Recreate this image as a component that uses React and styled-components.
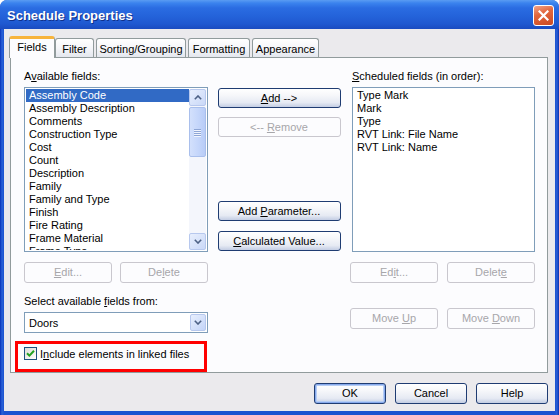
import React from "react";
import styled, { createGlobalStyle, css } from "styled-components";

const GlobalStyle = createGlobalStyle`
    html, body {
        margin : 0;
        padding : 0;
        background : #ffffff;
    }
    body {
        font-family : "Liberation Sans", Arial, sans-serif;
        font-size : 11px;
        color : #000000;
    }
`;

const Window = styled.div`
    width : 559px;
    height : 415px;
    box-sizing : border-box;
    display : flex;
    flex-direction : column;
    background : linear-gradient(90deg, #0831B8 0px, #2A63D8 2px, #1B52D0 4px, #1B52D0 555px, #2A5FD6 557px, #0A2FAE 559px);
    border-radius : 7px 7px 0 0;
    overflow : hidden;
`;

const TitleBar = styled.div`
    height : 29px;
    flex-shrink : 0;
    display : flex;
    align-items : center;
    justify-content : space-between;
    padding : 1px 5px 0 7px;
    box-sizing : border-box;
    background : linear-gradient(180deg, #5A9CF2 0px, #3B83EE 3px, #2A6CE2 8px, #2463DA 16px, #1F58D0 24px, #1A4BC0 29px);
`;

const Title = styled.span`
    color : #ffffff;
    font-weight : bold;
    font-size : 13px;
    text-shadow : 1px 1px 0 #10308A;
`;

const CloseButton = styled.div`
    width : 21px;
    height : 21px;
    box-sizing : border-box;
    border : 1px solid #ffffff;
    border-radius : 3px;
    background : linear-gradient(160deg, #F1A48A 0%, #E2663D 40%, #CC4A22 100%);
    display : flex;
    align-items : center;
    justify-content : center;
`;

const Client = styled.div`
    flex : 1;
    margin : 0 4px 4px 4px;
    background : #EBEAED;
    padding : 7px 7px 7px 6px;
    display : flex;
    flex-direction : column;
`;

const TabStrip = styled.div`
    height : 21px;
    display : flex;
    align-items : flex-end;
    gap : 2px;
    position : relative;
    z-index : 2;
`;

const Tab = styled.div`
    width : ${props => props.w}px;
    height : 19px;
    box-sizing : border-box;
    display : flex;
    align-items : center;
    justify-content : center;
    border : 1px solid #919B9C;
    border-bottom : none;
    border-radius : 3px 3px 0 0;
    background : linear-gradient(180deg, #FFFFFF 0%, #F5F6F9 50%, #E4E7EE 100%);
    padding-top : 1px;
    ${props => props.active && css`
        height : 22px;
        margin : 0 -2px -1px -1px;
        border-top : 3px solid #F7B43C;
        background : #FCFCFE;
        padding-top : 0;
        padding-bottom : 3px;
    `}
`;

const Panel = styled.div`
    height : 316px;
    box-sizing : border-box;
    border : 1px solid #919B9C;
    background : #FCFCFE;
    position : relative;
    display : grid;
    grid-template-columns : 184px 123px 185px;
    justify-content : space-between;
    align-items : start;
    padding : 12px 12px 0 13px;
`;

const Column = styled.div`
    display : flex;
    flex-direction : column;
`;

const Label = styled.div`
    height : 17px;
    line-height : 13px;
    margin-top : ${props => props.mt || 0}px;
    margin-left : ${props => props.ml || 0}px;
    white-space : nowrap;
`;

const U = styled.span`
    text-decoration : underline;
`;

const ListBox = styled.div`
    height : 165px;
    box-sizing : border-box;
    border : 1px solid #7F9DB9;
    background : #ffffff;
    display : flex;
    padding : 1px;
    margin-left : ${props => props.ml || 0}px;
    overflow : hidden;
`;

const Items = styled.div`
    flex : 1;
    display : flex;
    flex-direction : column;
    overflow : hidden;
`;

const Item = styled.div`
    height : 13px;
    flex-shrink : 0;
    line-height : 13px;
    padding-left : 3px;
    white-space : nowrap;
    ${props => props.selected && css`
        background : #316AC5;
        color : #ffffff;
    `}
`;

const ScrollBar = styled.div`
    width : 17px;
    display : flex;
    flex-direction : column;
    background : #F4F6FC;
`;

const ScrollButton = styled.div`
    height : 17px;
    box-sizing : border-box;
    border : 1px solid #B7C8EE;
    border-radius : 2px;
    background : linear-gradient(135deg, #E8EFFD 0%, #C9D8F8 100%);
    display : flex;
    align-items : center;
    justify-content : center;
    margin-top : ${props => props.bottom ? "auto" : "0"};
`;

const Thumb = styled.div`
    height : 50px;
    margin-top : 1px;
    box-sizing : border-box;
    border : 1px solid #A9BFEC;
    border-radius : 2px;
    background : linear-gradient(90deg, #D3E0FC 0%, #C6D7FB 50%, #B8CCF7 100%);
    display : flex;
    flex-direction : column;
    align-items : center;
    justify-content : center;
    gap : 1px;
`;

const Grip = styled.div`
    width : 7px;
    height : 1px;
    background : #8EA6D6;
    box-shadow : 0 1px 0 #F0F4FD;
`;

const Button = styled.div`
    width : ${props => props.w || 88}px;
    height : ${props => props.h || 21}px;
    line-height : ${props => (props.h || 21) - 2}px;
    box-sizing : border-box;
    margin-top : ${props => props.mt || 0}px;
    border : 1px solid #1F3C72;
    border-radius : 3px;
    background : linear-gradient(180deg, #FFFFFF 0%, #F6F7FA 35%, #E6EAF3 75%, #C3CDE3 100%);
    text-align : center;
    white-space : pre;
    ${props => props.isDefault && css`
        box-shadow : inset 0 0 0 1px #86A9EC, inset 0 0 0 2px #B6CDF4;
    `}
    ${props => props.disabled && css`
        border-color : #C9C7CE;
        background : transparent;
        color : #A7A6AA;
    `}
`;

const ButtonRow = styled.div`
    display : flex;
    justify-content : space-between;
    margin-top : ${props => props.mt || 0}px;
`;

const Dropdown = styled.div`
    height : 21px;
    box-sizing : border-box;
    border : 1px solid #7F9DB9;
    background : #ffffff;
    display : flex;
    align-items : center;
    padding : 1px;
`;

const DropdownText = styled.div`
    flex : 1;
    padding-left : 3px;
`;

const DropButton = styled.div`
    width : 16px;
    height : 17px;
    box-sizing : border-box;
    border : 1px solid #B7C8EE;
    border-radius : 2px;
    background : linear-gradient(135deg, #E8EFFD 0%, #C3D4F8 100%);
    display : flex;
    align-items : center;
    justify-content : center;
`;

const CheckRow = styled.div`
    display : flex;
    align-items : center;
    gap : 3px;
    margin-top : 14px;
    height : 13px;
`;

const CheckBox = styled.div`
    width : 13px;
    height : 13px;
    box-sizing : border-box;
    border : 1px solid #1C5180;
    background : linear-gradient(135deg, #DCDCD7 0%, #FFFFFF 100%);
    display : flex;
    align-items : center;
    justify-content : center;
`;

const Highlight = styled.div`
    position : absolute;
    left : 4px;
    top : 283px;
    width : 192px;
    height : 31px;
    box-sizing : border-box;
    border : 3px solid #FF0000;
    pointer-events : none;
`;

const Footer = styled.div`
    display : flex;
    justify-content : flex-end;
    gap : 9px;
    margin-top : 10px;
`;

const Chevron = ({up}) => (
    <svg width="8" height="5" viewBox="0 0 8 5">
        <polyline points={up ? "0.8,4.2 4,1 7.2,4.2" : "0.8,0.8 4,4 7.2,0.8"} fill="none" stroke="#4D6185" strokeWidth="1.6" />
    </svg>
);

const availableFields = [
    "Assembly Code", "Assembly Description", "Comments", "Construction Type", "Cost", "Count",
    "Description", "Family", "Family and Type", "Finish", "Fire Rating", "Frame Material", "Frame Type"
];

const scheduledFields = ["Type Mark", "Mark", "Type", "RVT Link: File Name", "RVT Link: Name"];

const tabs = [
    {name : "Fields", w : 46, active : true},
    {name : "Filter", w : 39},
    {name : "Sorting/Grouping", w : 90},
    {name : "Formatting", w : 62},
    {name : "Appearance", w : 67},
];

function App()
{
    return (
        <>
            <GlobalStyle />
            <Window>
                <TitleBar>
                    <Title>Schedule Properties</Title>
                    <CloseButton>
                        <svg width="11" height="11" viewBox="0 0 11 11">
                            <path d="M1.5 1.5 L9.5 9.5 M9.5 1.5 L1.5 9.5" stroke="#ffffff" strokeWidth="2.2" strokeLinecap="square" />
                        </svg>
                    </CloseButton>
                </TitleBar>
                <Client>
                    <TabStrip>
                        {tabs.map(t => <Tab key={t.name} w={t.w} active={t.active}>{t.name}</Tab>)}
                    </TabStrip>
                    <Panel>
                        <Column>
                            <Label>A<U>v</U>ailable fields:</Label>
                            <ListBox>
                                <Items>
                                    {availableFields.map((f, i) => <Item key={f} selected={i === 0}>{f}</Item>)}
                                </Items>
                                <ScrollBar>
                                    <ScrollButton><Chevron up /></ScrollButton>
                                    <Thumb><Grip /><Grip /><Grip /><Grip /></Thumb>
                                    <ScrollButton bottom><Chevron /></ScrollButton>
                                </ScrollBar>
                            </ListBox>
                            <ButtonRow mt={10}>
                                <Button disabled><U>E</U>dit...</Button>
                                <Button disabled>De<U>l</U>ete</Button>
                            </ButtonRow>
                            <Label mt={12}>Select available <U>f</U>ields from:</Label>
                            <Dropdown>
                                <DropdownText>Doors</DropdownText>
                                <DropButton><Chevron /></DropButton>
                            </Dropdown>
                            <CheckRow>
                                <CheckBox>
                                    <svg width="9" height="9" viewBox="0 0 9 9">
                                        <path d="M1 4.2 L3.4 6.6 L8 1.8" fill="none" stroke="#21A121" strokeWidth="2" />
                                    </svg>
                                </CheckBox>
                                <span>I<U>n</U>clude elements in linked files</span>
                            </CheckRow>
                        </Column>
                        <Column>
                            <Button w={123} h={20} mt={18}><U>A</U>dd --&gt;</Button>
                            <Button w={123} h={20} mt={9} disabled>{"<-- "}<U>R</U>emove</Button>
                            <Button w={123} h={20} mt={64}>{"Add "}<U>P</U>arameter...</Button>
                            <Button w={123} h={20} mt={10}><U>C</U>alculated Value...</Button>
                        </Column>
                        <Column>
                            <Label ml={2}><U>S</U>cheduled fields (in order):</Label>
                            <ListBox ml={2}>
                                <Items>
                                    {scheduledFields.map(f => <Item key={f}>{f}</Item>)}
                                </Items>
                            </ListBox>
                            <ButtonRow mt={10}>
                                <Button w={88} disabled>Ed<U>i</U>t...</Button>
                                <Button w={88} disabled>Delet<U>e</U></Button>
                            </ButtonRow>
                            <ButtonRow mt={25}>
                                <Button w={88} disabled>{"Move "}<U>U</U>p</Button>
                                <Button w={88} disabled>{"Move "}<U>D</U>own</Button>
                            </ButtonRow>
                        </Column>
                        <Highlight />
                    </Panel>
                    <Footer>
                        <Button w={72} isDefault>OK</Button>
                        <Button w={72}>Cancel</Button>
                        <Button w={72}>Help</Button>
                    </Footer>
                </Client>
            </Window>
        </>
    );
}

export default App;
